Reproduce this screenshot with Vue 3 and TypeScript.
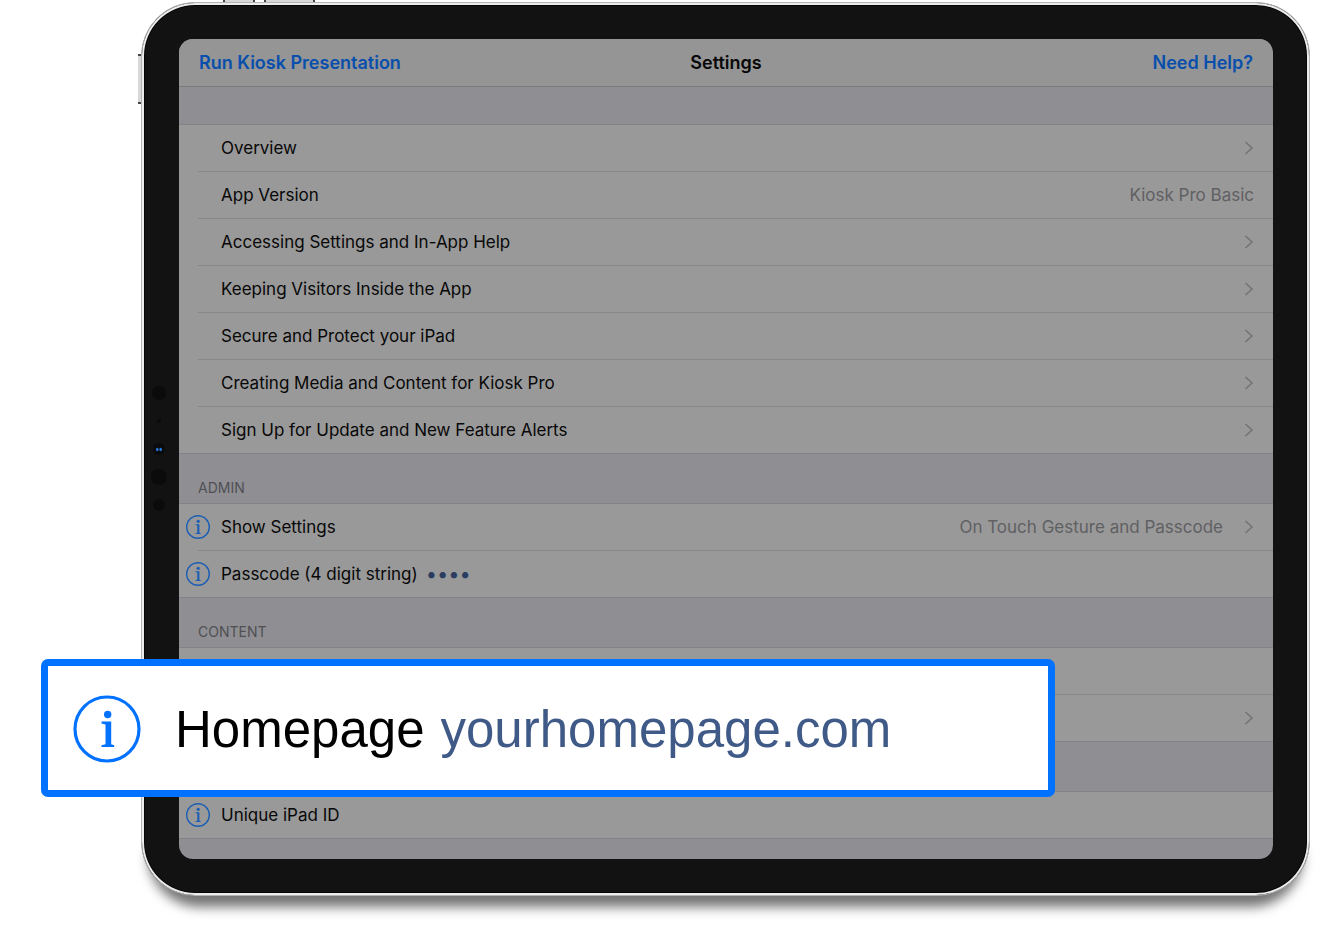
<script setup lang="ts">
import { ref } from 'vue'

interface Row {
  label?: string
  value?: string
  info?: boolean
  chevron?: boolean
  passcode?: boolean
}

interface Group {
  title?: string
  compact?: boolean
  rows: Row[]
}

const groups: Group[] = [
  {
    compact: true,
    rows: [
      { label: 'Overview', chevron: true },
      { label: 'App Version', value: 'Kiosk Pro Basic' },
      { label: 'Accessing Settings and In-App Help', chevron: true },
      { label: 'Keeping Visitors Inside the App', chevron: true },
      { label: 'Secure and Protect your iPad', chevron: true },
      { label: 'Creating Media and Content for Kiosk Pro', chevron: true },
      { label: 'Sign Up for Update and New Feature Alerts', chevron: true },
    ],
  },
  {
    title: 'ADMIN',
    rows: [
      { label: 'Show Settings', value: 'On Touch Gesture and Passcode', info: true, chevron: true },
      { label: 'Passcode (4 digit string)', info: true, passcode: true },
    ],
  },
  { title: 'CONTENT', rows: [{ info: true }, { info: true, chevron: true }] },
  { rows: [{ label: 'Unique iPad ID', info: true }] },
]

const passcode = ref('0000')
const homepage = ref('yourhomepage.com')
</script>

<template>
  <main class="stage">
    <div class="device">
      <span class="key key-top key-short"></span>
      <span class="key key-top key-long"></span>
      <span class="key key-side"></span>
      <svg class="sensors" viewBox="0 0 20 130" aria-hidden="true">
        <circle cx="10" cy="8" r="7" fill="#0b0b0b" />
        <circle cx="10" cy="36" r="2" fill="#0a0a0a" />
        <circle cx="10" cy="64" r="6" fill="#0b0b0d" />
        <ellipse cx="8.3" cy="64.500" rx="1.300" ry="1.700" fill="#2378d8" />
        <ellipse cx="11.700" cy="64.500" rx="1.300" ry="1.700" fill="#2378d8" />
        <circle cx="10" cy="92" r="8" fill="#0b0b0b" />
        <circle cx="10" cy="120" r="6" fill="#0b0b0b" />
      </svg>
      <div class="screen">
        <header class="nav">
          <button type="button" class="nav-action">Run Kiosk Presentation</button>
          <h1 class="nav-title">Settings</h1>
          <button type="button" class="nav-action nav-end">Need Help?</button>
        </header>
        <section v-for="(group, g) in groups" :key="g" class="group">
          <h2 class="group-title" :class="{ compact: group.compact }">{{ group.title }}</h2>
          <ul class="rows">
            <li v-for="(row, r) in group.rows" :key="r" class="row">
              <button v-if="row.info" type="button" class="info">
                <svg viewBox="0 0 68 68" aria-hidden="true">
                  <circle cx="34" cy="34" r="32" fill="none" stroke="currentColor" stroke-width="4" />
                  <circle cx="34.500" cy="18" r="4.500" fill="currentColor" />
                  <path d="M27 26h11v24.500l4 1v2.500H27v-2.500l5-1V29.500L27 28.500z" fill="currentColor" />
                </svg>
              </button>
              <component :is="row.chevron ? 'button' : 'div'" class="line" :type="row.chevron ? 'button' : undefined">
                <label v-if="row.passcode" for="passcode" class="label">{{ row.label }}</label>
                <span v-else class="label">{{ row.label }}</span>
                <input v-if="row.passcode" id="passcode" v-model="passcode" class="passcode" type="password" maxlength="4" />
                <span v-if="row.value" class="value">{{ row.value }}</span>
                <svg v-if="row.chevron" class="chevron" viewBox="0 0 10 16" aria-hidden="true">
                  <path d="M1.500 2l6.500 6-6.500 6" fill="none" stroke="currentColor" stroke-width="1.600" />
                </svg>
              </component>
            </li>
          </ul>
        </section>
      </div>
    </div>
    <div class="callout">
      <button type="button" class="callout-info">
        <svg viewBox="0 0 68 68" aria-hidden="true">
          <circle cx="34" cy="34" r="32" fill="none" stroke="currentColor" stroke-width="3.200" />
          <circle cx="34.700" cy="19.500" r="3.700" fill="currentColor" />
          <path d="M28.500 26.500h9.700v22.700l3 1v1.800H28.500v-1.800l4-1V29.500l-4-1z" fill="currentColor" />
        </svg>
      </button>
      <label for="homepage" class="callout-label">Homepage</label>
      <input id="homepage" v-model="homepage" class="callout-input" type="text" />
    </div>
  </main>
</template>

<style>
body {
  margin: 0;
  background: #fff;
}
</style>

<style scoped>
.stage {
  position: relative;
  overflow: hidden;
  padding: 2px 18px 33px 141px;
  font-family: Inter, "Liberation Sans", sans-serif;
}
button,
input {
  margin: 0;
  padding: 0;
  border: 0;
  background: none;
  font: inherit;
  color: inherit;
}
.device {
  position: relative;
  box-sizing: border-box;
  padding: 36px 36px 36px 37px;
  border: 1px solid #b4b4b4;
  border-radius: 54px;
  background: #121212;
  box-shadow: inset 0 0 0 2px #ececec, inset 0 0 0 3px #050505;
}
.device::before {
  content: "";
  position: absolute;
  z-index: -1;
  left: 8px;
  right: 8px;
  bottom: 0;
  height: 50px;
  border-radius: 0 0 50px 50px;
  box-shadow: 0 10px 12px 2px rgba(0, 0, 0, 0.55);
}
.key {
  position: absolute;
  box-sizing: border-box;
  background: #d8d8d8;
}
.key-top {
  top: -3px;
  height: 2px;
  border: solid #444;
  border-width: 0 2px;
}
.key-short {
  left: 81px;
  width: 32px;
}
.key-long {
  left: 122px;
  width: 51px;
}
.key-side {
  left: -4px;
  top: 51px;
  width: 3px;
  height: 50px;
  border: solid #444;
  border-width: 2px 0;
}
.sensors {
  position: absolute;
  left: 7px;
  top: 382px;
  width: 20px;
  height: 130px;
}
.screen {
  overflow: hidden;
  padding-bottom: 20px;
  border-radius: 14px;
  background: #8e8e93;
  color: #080808;
  font-size: 17px;
}
.nav {
  display: grid;
  grid-template-columns: 1fr auto 1fr;
  align-items: center;
  box-sizing: border-box;
  height: 48px;
  padding: 0 20px;
  border-bottom: 1px solid #7b7b7e;
  background: #959595;
  font-size: 18px;
}
.nav-action {
  justify-self: start;
  color: #084fad;
  font-weight: 600;
}
.nav-end {
  justify-self: end;
}
.nav-title {
  margin: 0;
  font-size: 18px;
  font-weight: 600;
}
.group-title {
  box-sizing: border-box;
  height: 49px;
  margin: 0;
  padding: 24px 19px 0;
  color: #505054;
  font-size: 14px;
  line-height: 20px;
  font-weight: 400;
}
.group-title.compact {
  height: 37px;
}
.rows {
  margin: 0;
  padding: 0;
  list-style: none;
  border-top: 1px solid #838387;
  border-bottom: 1px solid #838387;
  background: #999;
}
.row {
  display: flex;
  align-items: center;
  height: 46px;
  padding-left: 7px;
}
.row + .row {
  height: 47px;
}
.info {
  display: flex;
  width: 24px;
  height: 24px;
  margin-right: -12px;
  color: #1b5eb4;
}
.info svg {
  width: 24px;
  height: 24px;
}
.line {
  display: flex;
  flex: 1;
  align-items: center;
  box-sizing: border-box;
  height: 100%;
  margin-left: 12px;
  padding: 0 19px 0 23px;
  text-align: left;
}
.info + .line {
  margin-left: 0;
}
.row + .row .line {
  border-top: 1px solid #888889;
}
.label {
  white-space: nowrap;
}
.value {
  margin-left: auto;
  color: #606063;
}
.chevron {
  width: 10px;
  height: 16px;
  margin-left: auto;
  color: #747477;
}
.value + .chevron {
  margin-left: 21px;
}
.passcode {
  width: 80px;
  margin-left: 8px;
  color: #2a3d60;
  font-size: 20px;
  outline: 0;
}
.callout {
  position: absolute;
  left: 41px;
  right: 273px;
  top: 659px;
  display: flex;
  align-items: center;
  box-sizing: border-box;
  height: 138px;
  padding: 2px 26px 0 25px;
  border: 7px solid #0072ff;
  border-radius: 7px;
  background: #fff;
  color: #000;
  font-family: "Liberation Sans", Arial, sans-serif;
  font-size: 51px;
}
.callout-info {
  flex: none;
  display: flex;
  width: 68px;
  height: 68px;
  color: #0072ff;
}
.callout-info svg {
  width: 68px;
  height: 68px;
}
.callout-label {
  margin-left: 34px;
}
.callout-input {
  flex: 1;
  min-width: 0;
  margin-left: 16px;
  color: #405a88;
  outline: 0;
}
</style>
